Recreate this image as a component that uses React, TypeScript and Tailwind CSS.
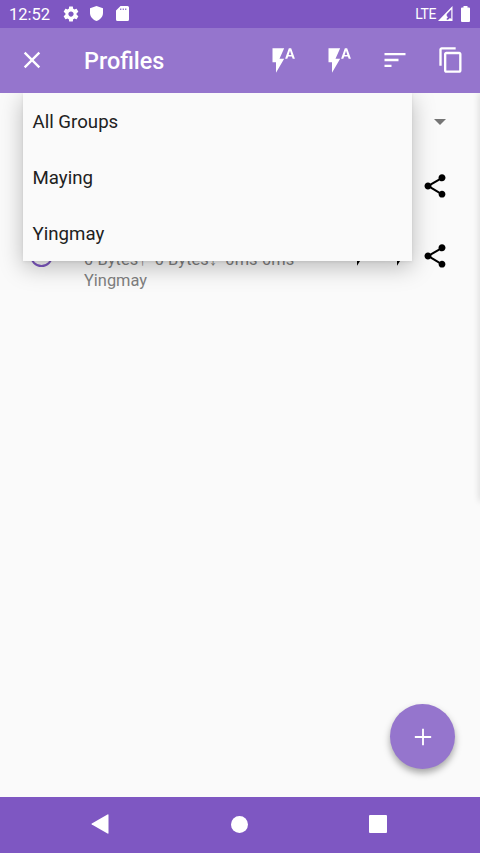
import React from "react";

const FLASH =
  "M3 2v12h3v9l7-12H9l4-9H3zm16 0h-2l-3.2 9h1.9l.7-2h3.2l.7 2h1.9L19 2zm-2.15 5.65L18 4l1.15 3.65h-2.3z";
const BOLT = "M3 2v11h3v7.300l7-11H9l4-7.300z";
const CLOSE =
  "M19 6.41L17.59 5 12 10.59 6.41 5 5 6.41 10.59 12 5 17.59 6.41 19 12 13.41 17.59 19 19 17.59 13.41 12z";
const SORT = "M3 18h6v-2H3v2zM3 6v2h18V6H3zm0 7h12v-2H3v2z";
const COPY =
  "M16 1H4c-1.1 0-2 .9-2 2v14h2V3h12V1zm3 4H8c-1.1 0-2 .9-2 2v14c0 1.1.9 2 2 2h11c1.1 0 2-.9 2-2V7c0-1.1-.9-2-2-2zm0 16H8V7h11v14z";
const SHARE =
  "M18 16.08c-.76 0-1.44.3-1.96.77L8.91 12.7c.05-.23.09-.46.09-.7s-.04-.47-.09-.7l7.05-4.11c.54.5 1.25.81 2.04.81 1.66 0 3-1.34 3-3s-1.34-3-3-3-3 1.34-3 3c0 .24.04.47.09.7L8.04 9.81C7.5 9.31 6.79 9 6 9c-1.66 0-3 1.34-3 3s1.34 3 3 3c.79 0 1.5-.31 2.04-.81l7.12 4.16c-.05.21-.08.43-.08.65 0 1.61 1.31 2.92 2.92 2.92s2.92-1.31 2.92-2.92-1.31-2.92-2.92-2.92z";
const GEAR =
  "M19.43 12.98c.04-.32.07-.64.07-.98s-.03-.66-.07-.98l2.11-1.65c.19-.15.24-.42.12-.64l-2-3.46c-.12-.22-.39-.3-.61-.22l-2.49 1c-.52-.4-1.08-.73-1.69-.98l-.38-2.65C14.46 2.18 14.25 2 14 2h-4c-.25 0-.46.18-.49.42l-.38 2.65c-.61.25-1.17.59-1.69.98l-2.49-1c-.23-.09-.49 0-.61.22l-2 3.46c-.13.22-.07.49.12.64l2.11 1.65c-.04.32-.07.65-.07.98s.03.66.07.98l-2.11 1.65c-.19.15-.24.42-.12.64l2 3.46c.12.22.39.3.61.22l2.49-1c.52.4 1.08.73 1.69.98l.38 2.65c.03.24.24.42.49.42h4c.25 0 .46-.18.49-.42l.38-2.65c.61-.25 1.17-.59 1.69-.98l2.49 1c.23.09.49 0 .61-.22l2-3.46c.12-.22.07-.49-.12-.64l-2.11-1.65zM12 15.5c-1.93 0-3.5-1.57-3.5-3.5s1.57-3.5 3.5-3.5 3.5 1.57 3.5 3.5-1.57 3.5-3.5 3.5z";
const PLUS = "M19 12.800h-6.200v6.200h-1.600v-6.200H5v-1.600h6.200V5h1.600v6.200H19z";

function Icon({ d, className = "size-7" }: { d: string; className?: string }) {
  return (
    <svg viewBox="0 0 24 24" fill="currentColor" className={`block shrink-0 ${className}`}>
      <path d={d} />
    </svg>
  );
}

function StatusBar() {
  return (
    <div className="flex h-7 shrink-0 items-center bg-[#7e57c2] pb-px pl-[9px] pr-[10px] text-white">
      <span className="w-[53px] pt-[2px] text-[16.5px] leading-[25px]">12:52</span>
      <Icon d={GEAR} className="size-[18px]" />
      <svg viewBox="0 0 13 15" className="ml-[10px] h-[15px] w-[13px]" fill="currentColor">
        <path d="M6.5 0 13 2.2V7c0 3.700-2.600 6.500-6.500 8C2.600 13.500 0 10.700 0 7V2.200z" />
      </svg>
      <svg viewBox="0 0 13 15" className="ml-[13px] h-[15px] w-[13px]" fill="currentColor">
        <path
          fillRule="evenodd"
          d="M4.500 0H11.500Q13 0 13 1.500V13.500Q13 15 11.500 15H1.500Q0 15 0 13.500V4.500zM4.200 2.500V4H5.300V2.500zM6.700 2.500V4H7.800V2.500zM9.200 2.500V4H10.300V2.500z"
        />
      </svg>
      <span className="ml-auto pt-[2px] text-[14px] leading-[25px] tracking-[-0.4px]">LTE</span>
      <svg viewBox="0 0 15 15" className="ml-[2px] h-[15px] w-[15px]" fill="currentColor">
        <path
          fillRule="evenodd"
          d="M14.500 0V15H0zM13.300 3.500 8.700 8.300V10l1.300 1.200-1.300 1.300V13.800h1.300l2-1.800 1.300 1z"
        />
      </svg>
      <svg viewBox="0 0 9 16" className="ml-2 h-4 w-[9px]" fill="currentColor">
        <path d="M2.500 0h4v1.500H8q1 0 1 1V15q0 1-1 1H1q-1 0-1-1V2.500q0-1 1-1h1.500z" />
      </svg>
    </div>
  );
}

function Toolbar() {
  return (
    <header className="z-20 flex h-[64.500px] shrink-0 items-center bg-[#9575cd] pl-[18px] text-white">
      <Icon d={CLOSE} />
      <h1 className="ml-[38px] w-[185px] pt-[2px] text-[23.400px] font-medium leading-7">Profiles</h1>
      <div className="flex w-[196px] items-center justify-between">
        <Icon d={FLASH} />
        <Icon d={FLASH} />
        <Icon d={SORT} />
        <Icon d={COPY} />
      </div>
    </header>
  );
}

function GroupMenu() {
  return (
    <ul className="absolute left-[23px] top-0 z-10 w-[389px] bg-[#fafafa] pt-[0.500px] text-[18.670px] text-[#212121] shadow-[0_6px_22px_rgba(0,0,0,0.26),0_1px_3px_rgba(0,0,0,0.08)]">
      {["All Groups", "Maying", "Yingmay"].map((group) => (
        <li key={group} className="flex h-14 items-center pl-[9.500px] pt-[2px]">
          {group}
        </li>
      ))}
    </ul>
  );
}

export default function App() {
  return (
    <div className="flex h-[853px] w-[480px] flex-col overflow-hidden bg-[#fafafa] font-['Roboto',sans-serif]">
      <StatusBar />
      <Toolbar />
      <main className="relative flex-1 overflow-hidden">
        <div className="flex h-[58px] items-center justify-end pr-[34px]">
          <svg viewBox="0 0 12 6" className="h-[6px] w-3" fill="#757575">
            <path d="M0 0h12L6 6z" />
          </svg>
        </div>
        <div className="flex h-[70px] items-center justify-end pr-[31px] text-black">
          <Icon d={SHARE} />
        </div>
        <div className="flex h-[70px] items-center pl-[30px] text-black">
          <span className="size-[23px] shrink-0 rounded-full border-2 border-[#7e57c2]" />
          <div className="ml-[31px] w-[266px] self-end text-[16.400px] leading-[21px] text-[#808080]">
            <p className="whitespace-pre tracking-[0.06px]">0 Bytes↑  0 Bytes↓  0ms·0ms</p>
            <p>Yingmay</p>
          </div>
          <Icon d={BOLT} />
          <Icon d={BOLT} className="ml-3 size-7" />
          <Icon d={SHARE} className="ml-[3px] size-7" />
        </div>
        <GroupMenu />
        <div className="absolute -right-1 top-0 h-[408px] w-1 shadow-[0_0_7px_rgba(0,0,0,0.2)]" />
        <button className="absolute bottom-[28px] right-[25px] flex size-[65px] items-center justify-center rounded-full bg-[#9575cd] text-white shadow-[0_4px_7px_rgba(0,0,0,0.34)]">
          <Icon d={PLUS} />
        </button>
      </main>
      <nav className="flex h-14 shrink-0 items-center justify-between bg-[#7e57c2] pb-[2px] pl-[91px] pr-[93.500px]">
        <svg viewBox="0 0 18 20" className="h-5 w-[18px]" fill="white">
          <path d="M16.500.5Q17.500 0 17.500 1V19q0 1-1 .5L.8 10.500q-.8-.5 0-1z" />
        </svg>
        <span className="ml-px size-[17px] rounded-full bg-white" />
        <span className="size-[18px] rounded-[1px] bg-white" />
      </nav>
    </div>
  );
}
